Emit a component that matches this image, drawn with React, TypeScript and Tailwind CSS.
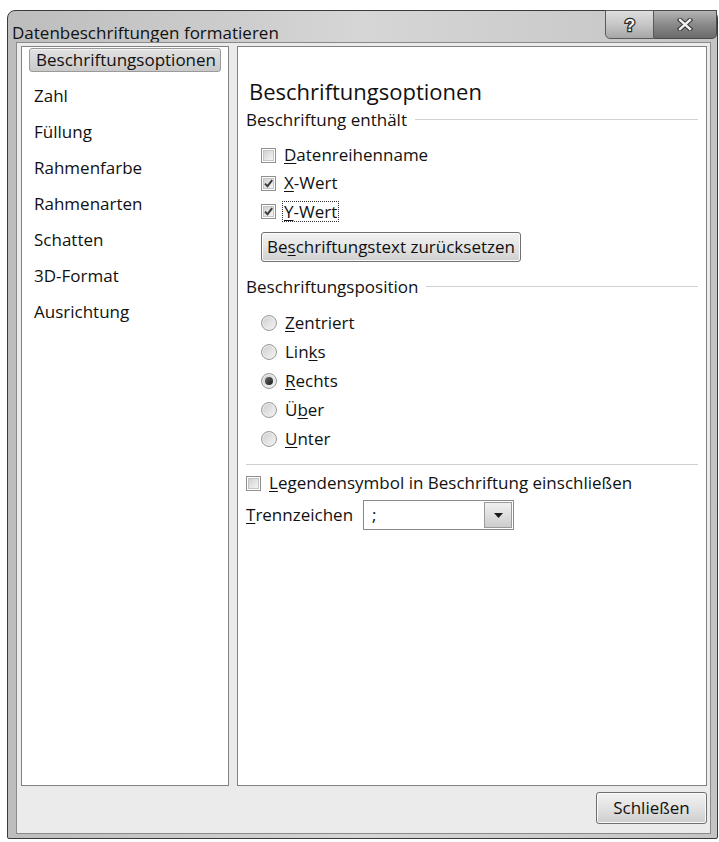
import React from "react";

const font = { fontFamily: '"Open Sans", "Noto Sans", sans-serif' };

function U({ children }: { children: React.ReactNode }) {
  return <span className="underline underline-offset-2 decoration-1">{children}</span>;
}

function CheckBox({ checked }: { checked?: boolean }) {
  return (
    <span className="relative inline-flex h-[15px] w-[15px] shrink-0 items-center justify-center border border-[#8e8e8e] bg-white">
      <span className="h-[11px] w-[11px] border border-[#c4c4c4] bg-gradient-to-br from-[#d2d2d2] to-[#f4f4f4]" />
      {checked && (
        <svg className="absolute left-[1px] top-[1px]" width="11" height="11" viewBox="0 0 11 11">
          <path d="M2 5.6 L4.5 8.2 L9.2 2.2" fill="none" stroke="#3a3a3a" strokeWidth="1.9" />
        </svg>
      )}
    </span>
  );
}

function Radio({ checked }: { checked?: boolean }) {
  return (
    <span className="inline-flex h-[16px] w-[16px] shrink-0 items-center justify-center rounded-full border border-[#9a9a9a] bg-gradient-to-br from-[#cdcdcd] to-[#f6f6f6] shadow-[inset_0_0_0_1px_#ececec]">
      {checked && (
        <span className="h-[8px] w-[8px] rounded-full bg-gradient-to-br from-[#6a6a6a] to-[#1e1e1e]" />
      )}
    </span>
  );
}

function GroupLabel({ children }: { children: React.ReactNode }) {
  return (
    <div className="flex items-center gap-[8px] pr-[8px]">
      <span className="whitespace-nowrap">{children}</span>
      <div className="h-0 flex-1 border-t border-[#d2d2d2] border-b border-b-white" />
    </div>
  );
}

const navItems = [
  "Zahl",
  "Füllung",
  "Rahmenfarbe",
  "Rahmenarten",
  "Schatten",
  "3D-Format",
  "Ausrichtung",
];

const positions: [React.ReactNode, boolean][] = [
  [<><U>Z</U>entriert</>, false],
  [<>Lin<U>k</U>s</>, false],
  [<><U>R</U>echts</>, true],
  [<>Ü<U>b</U>er</>, false],
  [<><U>U</U>nter</>, false],
];

export default function App() {
  return (
    <div className="h-[842px] w-[719px] overflow-hidden bg-white text-[17px] leading-[22px] text-[#111]" style={font}>
      <div className="ml-[7px] mt-[10px] flex h-[829px] w-[711px] flex-col rounded-t-[8px] rounded-b-[2px] border border-[#3a3a3a] bg-gradient-to-r from-[#bdbdbd] via-[#d6d6d6] to-[#c4c4c4]">
        {/* title bar */}
        <div className="flex h-[31px] shrink-0 items-start justify-between">
          <div className="pl-[4px] pt-[11px] text-[17px] leading-[22px] text-[#111]">
            Datenbeschriftungen formatieren
          </div>
          <div className="-mt-px flex h-[29px]">
            <div className="flex w-[49px] items-center justify-center rounded-bl-[5px] border border-[#5a5a5a] bg-gradient-to-b from-[#dedede] via-[#c6c6c6] to-[#a6a6a6]">
              <svg width="14" height="18" viewBox="0 0 14 18">
                <text
                  x="7"
                  y="15"
                  textAnchor="middle"
                  fontSize="17"
                  fontWeight="700"
                  fontFamily="Liberation Sans, Arial, sans-serif"
                  fill="#f4f4f4"
                  stroke="#2a2a2a"
                  strokeWidth="2.6"
                  paintOrder="stroke"
                >
                  ?
                </text>
              </svg>
            </div>
            <div className="flex w-[63px] items-center justify-center rounded-br-[5px] border border-l-0 border-[#4a4a4a] bg-gradient-to-b from-[#b4b4b4] via-[#8a8a8a] to-[#6a6a6a]">
              <svg width="16" height="13" viewBox="0 0 16 13">
                <path d="M3 2 L13 11 M13 2 L3 11" stroke="#333" strokeWidth="4.4" strokeLinecap="square" />
                <path d="M3 2 L13 11 M13 2 L3 11" stroke="#f2f2f2" strokeWidth="2.4" strokeLinecap="square" />
              </svg>
            </div>
          </div>
        </div>

        {/* client area */}
        <div className="ml-[8px] flex h-[792px] w-[695px] flex-col border border-[#8a8a8a] bg-[#ebebeb] pl-[4px] pr-[3px] pt-[3px]">
          <div className="flex h-[740px] gap-[8px]">
            {/* category list */}
            <div className="flex w-[208px] shrink-0 flex-col gap-[12px] border border-[#828282] bg-white px-[7px] pt-[1px]">
              <div className="flex h-[24px] items-center rounded-[3px] border border-[#9a9a9a] bg-gradient-to-b from-[#e2e2e2] to-[#c9c9c9] pl-[6px] shadow-[inset_0_1px_0_#f2f2f2]">
                Beschriftungsoptionen
              </div>
              {navItems.map((n) => (
                <div key={n} className="flex h-[24px] items-center pl-[5px]">
                  {n}
                </div>
              ))}
            </div>

            {/* options pane */}
            <div className="flex flex-1 flex-col border border-[#828282] bg-white pl-[8px] pt-[31px]">
              <div className="pl-[3px] text-[22px] leading-[26px]">Beschriftungsoptionen</div>
              <div className="mt-[5px]">
                <GroupLabel>Beschriftung enthält</GroupLabel>
              </div>
              <div className="mt-[13px] flex flex-col gap-[6px] pl-[15px]">
                <div className="flex h-[22px] items-center gap-[8px]">
                  <CheckBox />
                  <span>
                    <U>D</U>atenreihenname
                  </span>
                </div>
                <div className="flex h-[22px] items-center gap-[8px]">
                  <CheckBox checked />
                  <span>
                    <U>X</U>-Wert
                  </span>
                </div>
                <div className="flex h-[22px] items-center gap-[6px]">
                  <CheckBox checked />
                  <span className="border border-dotted border-[#333] px-[1px] leading-[19px]">
                    <U>Y</U>-Wert
                  </span>
                </div>
                <div className="mt-[4px] flex h-[30px] w-[260px] items-center justify-center rounded-[3px] border border-[#707070] bg-gradient-to-b from-[#f2f2f2] via-[#e4e4e4] to-[#cfcfcf] shadow-[inset_0_0_0_1px_#fbfbfb]">
                  Be<U>s</U>chriftungstext zurücksetzen
                </div>
              </div>

              <div className="mt-[14px]">
                <GroupLabel>Beschriftungsposition</GroupLabel>
              </div>
              <div className="mt-[14px] flex flex-col gap-[7px] pl-[15px]">
                {positions.map(([label, on], i) => (
                  <div key={i} className="flex h-[22px] items-center gap-[8px]">
                    <Radio checked={on} />
                    <span>{label}</span>
                  </div>
                ))}
              </div>

              <div className="mr-[8px] mt-[14px] border-t border-[#cfcfcf] border-b border-b-white" />

              <div className="mt-[6px] flex h-[22px] items-center gap-[8px]">
                <CheckBox />
                <span>
                  <U>L</U>egendensymbol in Beschriftung einschließen
                </span>
              </div>

              <div className="mt-[6px] flex items-center gap-[10px]">
                <span>
                  <U>T</U>rennzeichen
                </span>
                <div className="flex h-[30px] w-[151px] items-center border border-[#8a8a8a] bg-white">
                  <span className="flex-1 pl-[8px]">;</span>
                  <div className="mr-[1px] flex h-[26px] w-[28px] items-center justify-center border border-[#9a9a9a] bg-gradient-to-b from-[#f0f0f0] to-[#cdcdcd]">
                    <svg width="9" height="5" viewBox="0 0 9 5">
                      <path d="M0 0 H9 L4.5 5 Z" fill="#1a1a1a" />
                    </svg>
                  </div>
                </div>
              </div>
            </div>
          </div>

          {/* footer */}
          <div className="flex flex-1 items-start justify-end pt-[6px]">
            <div className="flex h-[32px] w-[111px] items-center justify-center rounded-[3px] border border-[#6e6e6e] bg-gradient-to-b from-[#f2f2f2] via-[#e2e2e2] to-[#cdcdcd] shadow-[inset_0_0_0_1px_#fafafa]">
              Schließen
            </div>
          </div>
        </div>
      </div>
    </div>
  );
}
